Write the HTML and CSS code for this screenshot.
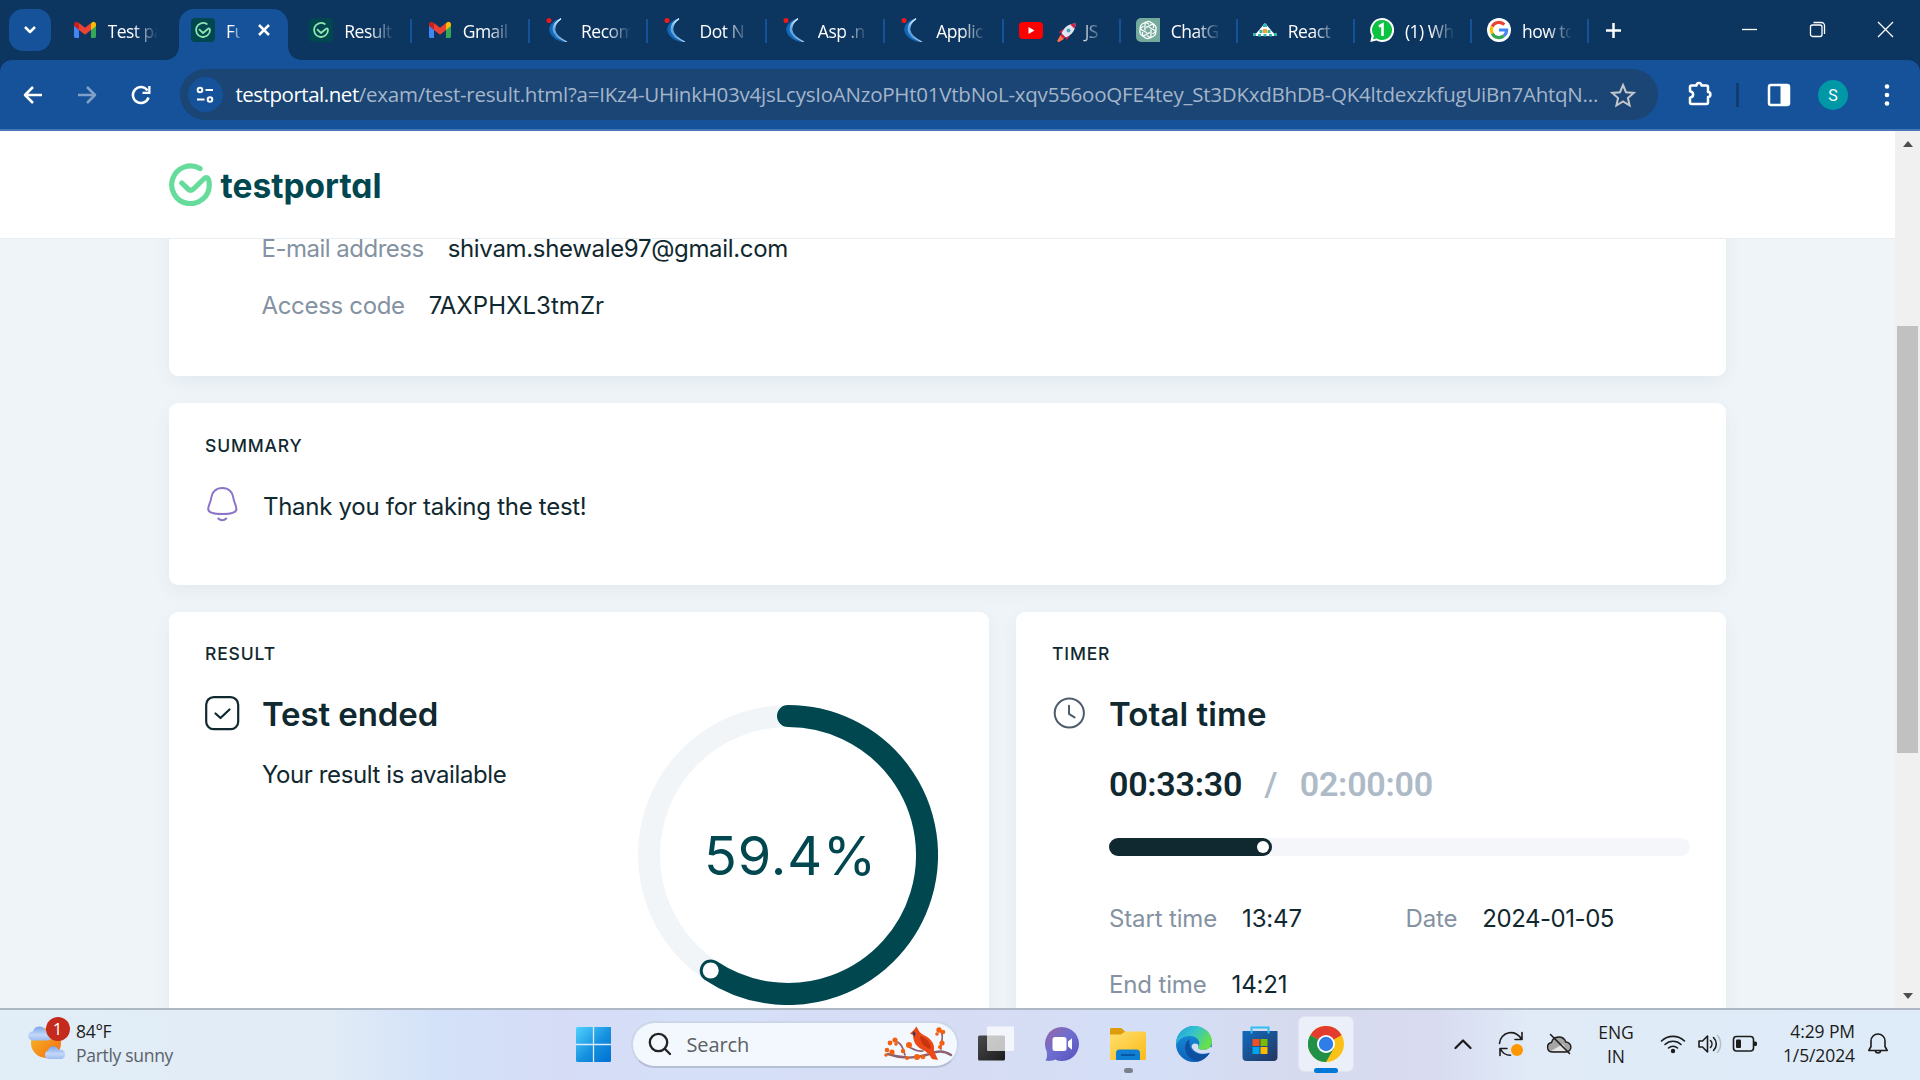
FILE: index.html
```html
<!DOCTYPE html>
<html lang="en">
<head>
<meta charset="utf-8">
<title>Testportal - test result</title>
<link rel="stylesheet" href="styles.css">
</head>
<body>
<svg width="0" height="0" class="defs" aria-hidden="true">
  <defs>
    <linearGradient id="swoosh" x1="0" y1="0" x2="0" y2="1"><stop offset="0" stop-color="#e4f0fa"/><stop offset=".35" stop-color="#6fb0e4"/><stop offset=".7" stop-color="#5a9fdc"/><stop offset="1" stop-color="#a9c4de"/></linearGradient>
    <linearGradient id="win" gradientUnits="userSpaceOnUse" x1="0" y1="0" x2="35" y2="35"><stop offset="0" stop-color="#4fd2ff"/><stop offset=".55" stop-color="#1590de"/><stop offset="1" stop-color="#0070d2"/></linearGradient>
    <linearGradient id="sun" x1="0" y1="0" x2="1" y2="1"><stop offset="0" stop-color="#f9bd2b"/><stop offset="1" stop-color="#f26a0c"/></linearGradient>
    <linearGradient id="cloud" x1="0" y1="0" x2="0" y2="1"><stop offset="0" stop-color="#7ba5ea"/><stop offset=".6" stop-color="#c3d8f8"/><stop offset="1" stop-color="#9dbcf0"/></linearGradient>
    <linearGradient id="chat" x1="0" y1="0" x2="1" y2="1"><stop offset="0" stop-color="#9a62a0"/><stop offset=".45" stop-color="#6f6fd0"/><stop offset="1" stop-color="#5650c0"/></linearGradient>
    <linearGradient id="folder" x1="0" y1="0" x2="1" y2="1"><stop offset="0" stop-color="#ffdf70"/><stop offset="1" stop-color="#fbbb18"/></linearGradient>
    <linearGradient id="edgeTop" x1="0" y1="0" x2="1" y2=".5"><stop offset="0" stop-color="#1f9ee0"/><stop offset=".5" stop-color="#35c3cc"/><stop offset="1" stop-color="#66e04a"/></linearGradient>
    <linearGradient id="edgeBody" x1="0" y1="0" x2="0" y2="1"><stop offset="0" stop-color="#1a94dc"/><stop offset="1" stop-color="#0a62ba"/></linearGradient>
    <linearGradient id="store" x1="0" y1="0" x2="1" y2="1"><stop offset="0" stop-color="#0f6cc0"/><stop offset="1" stop-color="#26355e"/></linearGradient>
    <linearGradient id="dark" x1="0" y1="0" x2="1" y2="1"><stop offset="0" stop-color="#4a4a4a"/><stop offset="1" stop-color="#1c1c1c"/></linearGradient>
    <symbol id="gmail" viewBox="0 0 24 24">
      <path d="M1 6v12.500c0 .8.700 1.500 1.500 1.500H6V10z" fill="#4285f4"/><path d="M23 6v12.500c0 .8-.7 1.500-1.500 1.500H18V10z" fill="#34a853"/>
      <path d="M18 5.500V12l5-4V6.500c0-2.600-2.600-3.300-4-2.200z" fill="#fbbc04"/><path d="M6 12V5l6 4.700L18 5v7l-6 4.700z" fill="#ea4335"/><path d="M1 6.500V8l5 4V5.200l-1-.9C3.600 3.200 1 3.900 1 6.500z" fill="#c5221f"/>
    </symbol>
    <symbol id="tp" viewBox="0 0 24 24"><rect width="24" height="24" rx="4" fill="#00474f"/><path d="M15.800 6.100A7 7 0 1 0 19 12c0-1.600-1-2.200-2.200-1L12 15l-3.500-3.400" fill="none" stroke="#8fe6ae" stroke-width="1.800" stroke-linecap="round" stroke-linejoin="round"/></symbol>
    <symbol id="naukri" viewBox="0 0 24 24"><path d="M15 .8C7.500 2.500 3.300 7 3.800 12.300 4.500 18 10.500 23 21 24 15 20.800 9.300 17 8.500 12.300 7.800 8 10.500 4 15 .8z" fill="#1268bb" stroke="#1268bb"/><path d="M15 .8C9.500 3.500 6.800 7.500 7.300 12.200 8 17 13.500 21 21 24 14 20.500 9.500 17 8.800 12.300 8.200 8 11 3.800 15 .8z" fill="url(#swoosh)" stroke="url(#swoosh)" stroke-width="1.200"/><circle cx="3" cy="2.500" r="2.500" fill="#f01818"/></symbol>
  </defs>
</svg>

<header class="tabstrip">
  <button class="tab-search"><svg width="16" height="12" viewBox="0 0 16 12"><path d="M3 3l5 5 5-5" class="line w25"/></svg></button>
  <div class="tabs">
    <div class="tab bare"><svg class="fav"><use href="#gmail"/></svg><span class="label">Test pa</span></div>
    <div class="tab active"><svg class="tabshape" width="138" height="51" viewBox="0 0 138 51"><path d="M0 51c7 0 14-5 14-14V15A15 15 0 0 1 29 0h79a15 15 0 0 1 15 15v22c0 9 7 14 14 14z" fill="#155299"/></svg><svg class="fav"><use href="#tp"/></svg><span class="label short">Full</span><svg class="close" width="14" height="14" viewBox="0 0 14 14"><path d="M2 2l10 10M12 2L2 12" class="line w25"/></svg></div>
    <div class="tab"><svg class="fav"><use href="#tp"/></svg><span class="label">Result</span></div>
    <div class="tab"><svg class="fav"><use href="#gmail"/></svg><span class="label">Gmail</span></div>
    <div class="tab"><svg class="fav"><use href="#naukri"/></svg><span class="label">Recom</span></div>
    <div class="tab"><svg class="fav"><use href="#naukri"/></svg><span class="label">Dot N</span></div>
    <div class="tab"><svg class="fav"><use href="#naukri"/></svg><span class="label">Asp .n</span></div>
    <div class="tab"><svg class="fav"><use href="#naukri"/></svg><span class="label">Applic</span></div>
    <div class="tab narrow"><svg class="fav" viewBox="0 0 24 24"><rect y="4" width="24" height="17" rx="4" fill="#f00"/><path d="M9.500 9v7l6-3.500z" fill="#fff"/></svg><span class="label"><svg class="rocket" width="19" height="19" viewBox="0 0 19 19"><path d="M6 6L1.500 9.500 6 10zM13 12l-3.500 5.500L9 13z" fill="#d81b4a"/><path d="M18.500.5C12 .5 7 4 4.500 10.500l4 4C15 12 18.500 7 18.500.5z" fill="#dfe6ee"/><path d="M18.500.5c-2 0-3.700.3-5.200 1l4.200 4.200c.7-1.600 1-3.300 1-5.200zM4.500 10.500l4 4-2 1.500-3.500-3.500z" fill="#d81b4a"/><circle cx="11.500" cy="7.500" r="2" fill="#4d9fc0"/><path d="M3.500 14l1.800 1.800L1 18.500z" fill="#ff7043" stroke="#ff7043" stroke-width="2"/></svg>JS</span></div>
    <div class="tab narrow"><svg class="fav" viewBox="0 0 24 24"><path d="M5 0h19v24H5a5 5 0 0 1-5-5V5a5 5 0 0 1 5-5z" fill="#74aa9c"/><g fill="none" stroke="#fff" stroke-width="1.300"><path id="petal" d="M9 6.200c.3-2.200 3-3.600 5.300-2.200l3.200 2.100v3.900M9 6.200v6.200"/><use href="#petal" transform="rotate(60 12 12)"/><use href="#petal" transform="rotate(120 12 12)"/><use href="#petal" transform="rotate(180 12 12)"/><use href="#petal" transform="rotate(240 12 12)"/><use href="#petal" transform="rotate(300 12 12)"/></g></svg><span class="label">ChatG</span></div>
    <div class="tab narrow"><svg class="fav" viewBox="0 0 24 24"><path d="M12 5L1 18h22z" fill="#fff"/><path d="M10 6h4v3h-4zM6.500 12h3v3h-3zM14.500 12h3v3h-3z" fill="#35b6b0"/><path d="M10 11h4v4h-4z" fill="#f5a623"/><path d="M0 15h3v3H0zM5 16h3v2.500H5zM10.500 16h3v2.500h-3zM16 16h3v2.500h-3zM21 15h3v3h-3z" fill="#35b6b0"/></svg><span class="label">React</span></div>
    <div class="tab narrow"><svg class="fav" viewBox="0 0 24 24"><path d="M12 0a12 12 0 1 1-5.500 22.600L.3 24l1.300-6.200A12 12 0 0 1 12 0z" fill="#fff"/><path d="M12 2a10 10 0 1 1-5.200 18.500L3 21.300l.9-3.500A10 10 0 0 1 12 2z" fill="#0dc143"/><path d="M9 8.500l3.500-2V18" fill="none" stroke="#fff" stroke-width="2.600"/></svg><span class="label">(1) Wh</span></div>
    <div class="tab narrow"><svg class="fav" viewBox="0 0 24 24"><circle cx="12" cy="12" r="12" fill="#fff"/><g fill="none" stroke-width="3.200"><path d="M17.300 6.600A7.600 7.600 0 0 0 5.200 8.600" stroke="#ea4335"/><path d="M5.200 8.600a7.600 7.600 0 0 0 0 6.800" stroke="#fbbc05"/><path d="M5.200 15.400a7.600 7.600 0 0 0 11.700 2.300" stroke="#34a853"/><path d="M12 12h7.600c0 2.400-1 4.400-2.700 5.700" stroke="#4285f4"/></g></svg><span class="label">how to</span></div>
  </div>
  <svg class="plus" width="17" height="17" viewBox="0 0 17 17"><path d="M8.500 1v15M1 8.500h15" class="line w25"/></svg>
  <div class="wincontrols">
    <span><svg width="17" height="17" viewBox="0 0 17 17"><path d="M1 8.500h15" class="line thin"/></svg></span>
    <span><svg width="17" height="17" viewBox="0 0 17 17"><rect x="1.500" y="4" width="11.500" height="11.500" rx="2" class="line thin"/><path d="M4.500 1.500h8a3 3 0 0 1 3 3V13" class="line thin"/></svg></span>
    <span><svg width="17" height="17" viewBox="0 0 17 17"><path d="M1 1l15 15M16 1L1 16" class="line thin"/></svg></span>
  </div>
</header>

<nav class="toolbar">
  <span class="tool"><svg width="22" height="22" viewBox="0 0 22 22"><path d="M20 11H3M11 3l-8 8 8 8" class="line w25"/></svg></span>
  <span class="tool dim"><svg width="22" height="22" viewBox="0 0 22 22"><path d="M2 11h17M11 3l8 8-8 8" class="line w25"/></svg></span>
  <span class="tool"><svg width="22" height="22" viewBox="0 0 22 22"><path d="M18.500 13.500A8 8 0 1 1 17.500 6.500" class="line w25"/><path d="M20.500 2v8h-8V7.700h5.700V2z" fill="#fff"/></svg></span>
  <div class="omnibox">
    <span class="site"><svg width="20" height="20" viewBox="0 0 20 20"><g class="line w2"><circle cx="5" cy="5" r="2.300"/><path d="M10.500 5H18"/><circle cx="15" cy="14.500" r="2.300"/><path d="M2 14.500h7.500"/></g></svg></span>
    <div class="url"><b>testportal.net</b><span>/exam/test-result.html?a=IKz4-UHinkH03v4jsLcysIoANzoPHt01VtbNoL-xqv556ooQFE4tey_St3DKxdBhDB-QK4ltdexzkfugUiBn7AhtqN...</span></div>
    <svg class="star" width="26" height="26" viewBox="0 0 26 26"><path d="M13 3l3 7.200 7.700.7-5.800 5.100 1.700 7.500-6.600-4-6.600 4 1.700-7.500L2.300 10.900l7.700-.7z" fill="none" stroke="#c4c7cc" stroke-width="2"/></svg>
  </div>
  <div class="actions">
    <span class="tool"><svg class="puzzle" width="28" height="28" viewBox="0 0 28 28"><path d="M4 7a1.500 1.500 0 0 1 1.500-1.500h5a2.500 2.600 0 0 1 5 0H20.500A1.500 1.500 0 0 1 22 7v5a2.400 2.500 0 0 1 0 5v5.500a1.500 1.500 0 0 1-1.500 1.500h-15A1.500 1.500 0 0 1 4 22.500v-4.800c4.200-.8 4.200-5.600 0-6.400z" class="line w25"/></svg></span>
    <i class="divider"></i>
    <span class="tool"><svg width="24" height="24" viewBox="0 0 24 24"><rect x="2" y="2" width="20" height="20" rx="2" class="line w25"/><path d="M13.500 2H22v20h-8.500z" fill="#fff"/></svg></span>
    <span class="tool"><span class="avatar">S</span></span>
    <span class="tool"><svg width="6" height="24" viewBox="0 0 6 24" fill="#fff"><circle cx="3" cy="3.500" r="2.300"/><circle cx="3" cy="12" r="2.300"/><circle cx="3" cy="20.500" r="2.300"/></svg></span>
  </div>
</nav>

<div class="viewport">
  <div class="page">
    <div class="topbar">
      <svg width="43" height="43" viewBox="0 0 43 43"><path d="M31 5.600A18.800 18.800 0 1 0 40.300 21.500C40.300 19 40 17 39 15.500c-.8-1.300-2.600-1.300-3.800 0L24.500 26c-1.800 1.700-3.700 1.700-5.500 0L12.800 20" fill="none" stroke="#66dc9c" stroke-width="5.200" stroke-linecap="round" stroke-linejoin="round"/></svg>
      <span class="brand">testportal</span>
    </div>
    <main class="content">
      <section class="card person">
        <div class="pair"><span class="key mail">E-mail address</span><span>shivam.shewale97@gmail.com</span></div>
        <div class="pair"><span class="key">Access code</span><span class="code">7AXPHXL3tmZr</span></div>
      </section>
      <section class="card summary">
        <h2>SUMMARY</h2>
        <div class="row"><svg class="bell" width="36" height="36" viewBox="0 0 36 36"><g fill="none" stroke="#8b74c8" stroke-width="2" stroke-linecap="round"><path d="M17.300 2c-6.300 0-10.500 4-11 9.500-.4 5-3.100 7.500-3.100 11.500 0 3.600 5.300 5 14.100 5s14.100-1.400 14.100-5c0-4-2.700-6.500-3.100-11.500C27.800 6 23.600 2 17.300 2z"/><path d="M13.300 32.500c2.300 2.400 5.700 2.400 8 0"/></g></svg><p>Thank you for taking the test!</p></div>
      </section>
      <div class="columns">
        <section class="card result">
          <div>
            <h2>RESULT</h2>
            <div class="row head"><svg width="36" height="36" viewBox="0 0 36 36"><g fill="none" stroke="#10282f" stroke-width="2.200" stroke-linecap="round" stroke-linejoin="round"><rect x="1.200" y="1.200" width="32" height="32" rx="7.500"/><path d="M10.500 17.500l5 4.500 9-8.500"/></g></svg><h3>Test ended</h3></div>
            <p class="note">Your result is available</p>
          </div>
          <svg class="donut" width="300" height="300" viewBox="0 0 300 300">
            <circle cx="150" cy="150" r="139" fill="none" stroke="#f1f5f8" stroke-width="22"/>
            <path d="M150 11A139 139 0 1 1 72.700 265.500" fill="none" stroke="#00474f" stroke-width="22" stroke-linecap="round"/>
            <circle cx="72.700" cy="265.500" r="8" fill="#fff"/>
            <text x="152.500" y="170" text-anchor="middle">59.4%</text>
          </svg>
        </section>
        <section class="card timer">
          <h2>TIMER</h2>
          <div class="row head"><svg width="36" height="36" viewBox="0 0 36 36"><g fill="none" stroke="#4d5c6a" stroke-width="2" stroke-linecap="round" stroke-linejoin="round"><circle cx="17.300" cy="17" r="14.600"/><path d="M17 9.800v8l5.500 3.600"/></g></svg><h3 class="tt">Total time</h3></div>
          <div class="body">
            <div class="clock"><span>00:33:30</span><span class="mute">/</span><span class="mute">02:00:00</span></div>
            <div class="bar"><div class="fill" style="width:28.100%"><i></i></div></div>
            <div class="facts">
              <div class="pair"><span class="key">Start time</span><span>13:47</span></div>
              <div class="pair"><span class="key">Date</span><span class="date">2024-01-05</span></div>
              <div class="pair"><span class="key">End time</span><span>14:21</span></div>
            </div>
          </div>
        </section>
      </div>
    </main>
  </div>
  <div class="scrollbar"><i class="up"></i><div class="track"><div class="thumb"></div></div><i class="down"></i></div>
</div>

<footer class="taskbar">
  <div class="weather">
    <div class="wicon"><svg width="38" height="38" viewBox="0 0 38 38"><circle cx="18" cy="20" r="15" fill="url(#sun)"/><path d="M4.500 17.500a4.500 4.500 0 0 1 .5-9A6.500 6.500 0 0 1 17.500 8a4.800 4.800 0 0 1 3 9.500z" fill="url(#cloud)"/><path d="M20 36a4.500 4.500 0 0 1 0-8.500 5.500 5.500 0 0 1 10.500-.5 4.600 4.600 0 0 1 3.500 9z" fill="url(#cloud)"/></svg><span class="badge">1</span></div>
    <div class="wtext"><span>84°F</span><span class="sub">Partly sunny</span></div>
  </div>
  <div class="apps">
    <span class="app"><svg width="35" height="35" viewBox="0 0 35 35" fill="url(#win)"><path d="M1.500 0H35v33.500a1.500 1.500 0 0 1-1.500 1.500h-32A1.500 1.500 0 0 1 0 33.500v-32A1.500 1.500 0 0 1 1.500 0z"/><path d="M17.500 0v35M0 17.500h35" stroke="#dbe9fb" stroke-width="1.300"/></svg></span>
    <div class="search">
      <svg width="24" height="24" viewBox="0 0 24 24"><g fill="none" stroke="#222" stroke-width="2.300" stroke-linecap="round"><circle cx="10.500" cy="10.500" r="8.700"/><path d="M17 17l5 5"/></g></svg>
      <span>Search</span>
      <svg class="bird" width="70" height="36" viewBox="0 0 70 36"><g fill="none" stroke="#8d6270" stroke-width="1.700" stroke-linecap="round"><path d="M5 28c14 5 28 4 38 1s15-6 25 0" stroke-width="2.400"/><path d="M11 15c8 1 9 8 11 14M26 21c4 2 8 5 14 4M58 6c4 6-2 13 0 17"/></g><g fill="#f4600f"><circle cx="7" cy="17" r="2.400"/><circle cx="12" cy="14" r="2.600"/><circle cx="13" cy="18" r="1.800"/><circle cx="4" cy="24" r="2.300"/><circle cx="9" cy="26" r="2.600"/><circle cx="3" cy="29" r="1.800"/><circle cx="20" cy="25" r="2.200"/><circle cx="26" cy="19" r="3"/><circle cx="34" cy="31" r="3"/><circle cx="40" cy="31" r="2.300"/><circle cx="24" cy="32" r="2"/><circle cx="56" cy="4" r="2.700"/><circle cx="60" cy="6" r="2.300"/><circle cx="54" cy="8" r="1.800"/><circle cx="59" cy="17" r="2.600"/><circle cx="57" cy="21" r="2"/></g><path d="M33.500.5l-3.500 4.500-3 2.500 3 1.500c.3 8 4 12 10 15 4 2 6 4 9 9l6 1-4-9c1-7-2.500-11.500-8.500-15-3.500-2-5.500-3-6.500-5z" fill="#ea4a18"/><path d="M37 10c6 1.500 10.500 6 11 13-6-1-11-6-11-13z" fill="#c8340e"/><path d="M30 5l2.500 2-.8 4-2-3z" fill="#33386a"/></svg>
    </div>
    <span class="app"><svg width="36" height="36" viewBox="0 0 36 36"><rect x="0" y="9.500" width="27" height="25" rx="1.500" fill="url(#dark)"/><path d="M9 .5h27v23.500a1 1 0 0 1-1 1H10a1 1 0 0 1-1-1z" fill="#fff" opacity=".72"/></svg></span>
    <span class="app"><svg width="36" height="36" viewBox="0 0 36 36"><path d="M18 1a17 17 0 1 1-7 32.500C8 35 4.500 35.300 1.500 34.500 3 32.500 3.300 29 2.700 25.500A17 17 0 0 1 18 1z" fill="url(#chat)"/><rect x="8.500" y="11" width="14" height="14" rx="2.500" fill="#fff"/><path d="M24 15.500l4-3.200v11.400l-4-3.200z" fill="#fff"/></svg></span>
    <span class="app open"><svg width="36" height="36" viewBox="0 0 36 36"><path d="M0 3.500A1.500 1.500 0 0 1 1.500 2h9.700l4 3.500V10H0z" fill="#dd9c0c"/><path d="M0 8.500h11l4-3H34.500A1.500 1.500 0 0 1 36 7v25.500a1.500 1.500 0 0 1-1.500 1.500h-33A1.500 1.500 0 0 1 0 32.500z" fill="url(#folder)"/><path d="M6 34V27a3.500 3.500 0 0 1 3.500-3.500h17A3.500 3.500 0 0 1 30 27v7z" fill="#0f7fd4"/><path d="M11 29h14" stroke="#08519a" stroke-width="1.800"/></svg></span>
    <span class="app"><svg width="36" height="36" viewBox="0 0 36 36"><circle cx="18" cy="18" r="18" fill="url(#edgeBody)"/><path d="M18 0c10 0 18 7 18 15.500 0 5-3.800 8.500-8.500 8.500-3.500 0-5.500-1.200-5.500-2.500s1.300-1.500 1.300-4.500-3-7-9.300-7C7 10 2 14 .3 19-.8 8.500 7.500 0 18 0z" fill="url(#edgeTop)"/><path d="M13.500 13C9.500 16 8 21 10 26c2.500 6.200 8 9.500 13 9.300 5-1.600 8.500-5 10.500-8.300-9 3.500-19 0-20-8.500-.2-2 0-4 0-5.500z" fill="#0f4f9f"/><path d="M22 21.500c0 1.300 2 2.500 5.500 2.500 2.700 0 5-1 6.500-3l2 .5v5l-2.700.2C27 29 19 27.500 16 22c-1-2 0-4.500 3-4.500 2.200 0 4 1 3.300 2.500z" fill="#d6def4"/></svg></span>
    <span class="app"><svg width="36" height="36" viewBox="0 0 36 36"><path d="M.5 5h35v26a4 4 0 0 1-4 4h-27a4 4 0 0 1-4-4z" fill="url(#store)"/><path d="M9.500 7.500V1.500h17v6" fill="none" stroke="#2fc0f2" stroke-width="2"/><path d="M10.500 13h7v7h-7z" fill="#f25022"/><path d="M18.500 13h7v7h-7z" fill="#7fba00"/><path d="M10.500 21h7v7h-7z" fill="#00a4ef"/><path d="M18.500 21h7v7h-7z" fill="#ffb900"/></svg></span>
    <span class="app current"><span class="tile"><svg width="36" height="36" viewBox="0 0 36 36"><circle cx="18" cy="18" r="18" fill="#fbc116"/><path d="M18 18L2.400 9A18 18 0 0 1 33.600 9z" fill="#e33b2e"/><path d="M2.400 9A18 18 0 0 0 18 36l7.800-13.500L18 18z" fill="#219147"/><circle cx="18" cy="18" r="9" fill="#fff"/><circle cx="18" cy="18" r="7.200" fill="#2f7de9"/></svg></span></span>
  </div>
  <div class="tray">
    <span class="t48"><svg width="18" height="12" viewBox="0 0 18 12"><path d="M1.500 10L9 2.500l7.500 7.500" class="ink w2"/></svg></span>
    <span class="t48"><svg width="26" height="26" viewBox="0 0 26 26"><g class="ink"><path d="M1.500 12.500A11.500 11.500 0 0 1 23.500 8.500M24 1.500V8.500h-7M12.500 24.300A11 11 0 0 1 2.500 18M2 24.500V17.500h7"/></g><circle cx="19" cy="19" r="6" fill="#ff9800"/></svg></span>
    <span class="t48"><svg width="26" height="22" viewBox="0 0 26 22"><path d="M6 19a4.800 4.800 0 0 1-.5-9.500 7.500 7.500 0 0 1 14.300-.5A5 5 0 0 1 20 19z" fill="#a5a5a5" stroke="#1c1c1c" stroke-width="1.400"/><path d="M5 18l12-7 4 7z" fill="#e4e4e4"/><path d="M4.500 1.500l19 19" class="ink"/></svg></span>
    <span class="lang"><span>ENG</span><span>IN</span></span>
    <span class="wifi"><svg width="26" height="20" viewBox="0 0 26 20"><path d="M1.500 7a16.500 16.500 0 0 1 23 0M5 10.500a11.500 11.500 0 0 1 16 0M8.500 14a6.500 6.500 0 0 1 9 0" class="ink"/><circle cx="13" cy="17" r="2.200" fill="#1c1c1c"/></svg></span>
    <span class="vol"><svg width="26" height="22" viewBox="0 0 26 22"><path d="M2 8h3.500l5-5v16l-5-5H2zM13.500 7.500a5 5 0 0 1 0 7M16.500 4.500a9 9 0 0 1 0 13" class="ink"/><path d="M20 2a13 13 0 0 1 0 18" fill="none" stroke="#b5bdc6" stroke-width="1.500"/></svg></span>
    <span class="batt"><svg width="26" height="18" viewBox="0 0 26 18"><rect x="1.500" y="1.500" width="20" height="14.500" rx="3" class="ink"/><rect x="4" y="4.500" width="5" height="8.500" rx="1" fill="#1c1c1c"/><path d="M22 6.500h1.500a1.500 1.500 0 0 1 1.500 1.500v1.500a1.500 1.500 0 0 1-1.500 1.500H22z" fill="#1c1c1c"/></svg></span>
    <span class="time"><span>4:29 PM</span><span>1/5/2024</span></span>
    <span class="notify"><svg width="22" height="24" viewBox="0 0 22 24"><path d="M11 2a7 7 0 0 0-7 7v5.500L1.800 18.500h18.400L18 14.500V9a7 7 0 0 0-7-7zM8.300 19a2.800 2.800 0 0 0 5.400 0" class="ink"/></svg></span>
  </div>
</footer>
</body>
</html>
```
FILE: styles.css
```css
* { box-sizing: border-box; }
body {
  margin: 0;
  width: 1920px;
  height: 1080px;
  overflow: hidden;
  display: flex;
  flex-direction: column;
  background: #0c3560;
  font-family: "Open Sans", "Noto Sans", sans-serif;
}
h2, h3, p { margin: 0; }
svg { display: block; flex: none; }
.defs { position: absolute; }
.line { fill: none; stroke: #fff; stroke-width: 2; stroke-linejoin: round; }
.w25 { stroke-width: 2.5; }
.w2 { stroke-width: 2; }
.thin { stroke-width: 1.3; }
.ink { fill: none; stroke: #1c1c1c; stroke-width: 1.6; stroke-linecap: round; stroke-linejoin: round; }
.ink.w2 { stroke-width: 2.2; }

/* Browser tabs */
.tabstrip { height: 60px; flex: none; display: flex; align-items: flex-start; padding-left: 9px; }
.tab-search {
  width: 42px; height: 42px; margin-top: 9px; padding: 0; border: 0; border-radius: 14px;
  background: #155299; display: flex; align-items: center; justify-content: center;
}
.tabs { display: flex; margin: 9px 0 0 4.5px; }
.tab {
  width: 118.4px; height: 51px; padding: 0 0 9px 17px; position: relative;
  display: flex; align-items: center; color: #fff;
}
.tab.narrow { width: 117.1px; padding-left: 16px; }
.tab::after { content: ""; position: absolute; right: -1px; top: 10px; width: 2px; height: 24px; background: #155299; }
.tab.bare::after, .tab.active::after { display: none; }
.tab.active > * { position: relative; }
.tab.active > .tabshape { position: absolute; left: -9px; top: 0; }
.fav { width: 24px; height: 24px; margin-right: 11px; }
.label {
  width: 50px; overflow: hidden; white-space: nowrap; font-size: 17.5px; line-height: 24px; letter-spacing: -.5px; padding-top: 2px;
  -webkit-mask-image: linear-gradient(90deg, #000 50%, transparent); mask-image: linear-gradient(90deg, #000 50%, transparent);
}
.label.short { width: 14px; -webkit-mask-image: linear-gradient(90deg, #000 40%, transparent 120%); mask-image: linear-gradient(90deg, #000 40%, transparent 120%); }
.close { margin-left: 17px; }
.rocket { display: inline-block; vertical-align: -4px; margin: 0 9px 0 3px; }
.plus { margin: 22px 0 0 17px; }
.wincontrols { margin-left: auto; display: flex; margin-top: 21px; }
.wincontrols span { width: 68.4px; display: flex; justify-content: center; }

/* Address bar */
.toolbar {
  height: 71px; flex: none; display: flex; align-items: center; padding: 0 6px; background: #155299;
  border-bottom: 2px solid #4678b6; border-radius: 12px 12px 0 0;
}
.tool { width: 54px; display: flex; justify-content: center; align-items: center; }
.dim { opacity: .45; }
.omnibox {
  width: 1479px; height: 51px; margin-left: 12px; border-radius: 26px; background: #1a4575;
  display: flex; align-items: center; padding-left: 8px;
}
.site { width: 35px; height: 35px; border-radius: 50%; background: #155299; display: flex; align-items: center; justify-content: center; }
.url { width: 1376px; padding: 0 0 2px 12.5px; display: flex; font-size: 20.5px; line-height: 28px; white-space: nowrap; color: #a5b5c9; }
.url b { font-weight: 400; color: #fff; letter-spacing: -.46px; }
.url span { letter-spacing: -.23px; }
.star { margin-left: 11px; }
.actions { display: flex; align-items: center; margin-left: 13px; }
.puzzle { margin: -2px 0 0 3px; }
.divider { width: 3px; height: 24px; margin: 0 13px 0 11px; background: #103d70; }
.avatar {
  width: 30px; height: 30px; border-radius: 50%; background: #0097a7; color: #fff;
  font: 16px/31px Roboto, sans-serif; text-align: center;
}

/* Page */
.viewport { flex: 1; min-height: 0; display: flex; }
.page { flex: 1; height: 877px; overflow: hidden; background: #eff4f8; font-family: Inter, sans-serif; color: #10282f; }
.topbar {
  position: relative; z-index: 2; height: 108px; display: flex; align-items: center; gap: 8.5px;
  padding: 0 0 1px 169px; background: #fff; border-bottom: 1px solid #e9eef3;
}
.brand { font-size: 33.5px; font-weight: 700; letter-spacing: 0; line-height: 40px; padding-top: 3px; color: #00474f; font-feature-settings: "cv11"; }
.content { width: 1557px; margin: -40px 0 0 169px; display: flex; flex-direction: column; gap: 27px; }
.card { background: #fff; border-radius: 9px; box-shadow: 0 6px 18px rgba(30, 80, 110, .06); }
.person { height: 177px; padding: 20.5px 0 0 92.5px; }
.pair { height: 57px; display: flex; align-items: center; gap: 24px; font-size: 24px; letter-spacing: -.33px; white-space: nowrap; }
.key { color: #8492a2; }
.mail { letter-spacing: -.5px; }
.code { letter-spacing: .05px; }
.summary { height: 182px; padding: 31px 36px; }
h2 { font-size: 17.5px; font-weight: 500; line-height: 24px; letter-spacing: .85px; }
.row { margin-top: 30px; height: 36px; display: flex; align-items: center; gap: 22px; }
.row p { font-size: 24px; letter-spacing: -.28px; }
.row.head { margin-top: 30px; }
.bell { margin-top: -4px; }
h3 { font-size: 33px; font-weight: 600; line-height: 36px; letter-spacing: -.1px; margin-left: -1px; padding-bottom: 1px; }
.columns { display: flex; gap: 27px; }
.result { width: 820px; height: 500px; padding: 31px 51px 0 36px; display: flex; justify-content: space-between; }
.result h2, .timer h2 { margin-top: -1px; margin-bottom: 1px; }
.note { margin: 25px 0 0 57px; font-size: 24px; line-height: 36px; letter-spacing: -.4px; }
.donut { margin-top: 62px; }
.donut text { font: 400 54px Inter, sans-serif; letter-spacing: .9px; fill: #00474f; }
.timer { flex: 1; padding: 31px 36px 0; }
.tt { letter-spacing: .1px; }
.body { padding-left: 57px; }
.clock { margin-top: 32px; display: flex; font: 600 34px/40px Roboto, sans-serif; letter-spacing: -.25px; }
.clock .mute { color: #aebac7; margin-left: 22.5px; }
.bar { margin-top: 34px; height: 18px; border-radius: 9px; background: #f4f6fa; }
.fill { height: 18px; border-radius: 9px; background: #10282f; display: flex; align-items: center; justify-content: flex-end; padding-right: 3px; }
.fill i { width: 12px; height: 12px; border-radius: 50%; background: #fff; }
.facts { margin-top: 29px; display: grid; grid-template-columns: 296.5px 1fr; }
.facts .pair { height: 66px; gap: 25px; letter-spacing: -.15px; }
.facts .date { letter-spacing: -.46px; }

.scrollbar { width: 25px; background: #f0f0f0; display: flex; flex-direction: column; align-items: center; padding: 10px 0 9px; }
.scrollbar .up { border: 5.5px solid transparent; border-bottom: 6px solid #4d4d4d; border-top: 0; }
.scrollbar .down { border: 5.5px solid transparent; border-top: 6px solid #4d4d4d; border-bottom: 0; }
.track { flex: 1; width: 21px; padding-top: 179px; }
.thumb { height: 427px; background: #c1c1c1; }

/* Windows taskbar */
.taskbar {
  height: 72px; flex: none; border-top: 2px solid #aeb8c4; display: flex; position: relative; color: #1c1c1c;
  background: linear-gradient(90deg, #e1edf7 0, #e1ecf7 330px, #d3e1f9 440px, #d6dcf6 560px, #d5e0f8 700px, #d6dcf3 960px, #d4dff7 1150px, #d6daee 1300px, #d9dcf0 1440px, #e0ebf7 1530px, #deebf8 1920px);
}
.weather { width: 560px; display: flex; padding-left: 28px; }
.wicon { width: 38px; padding-top: 13px; position: relative; }
.badge {
  position: absolute; left: 17.5px; top: 7px; width: 24px; height: 24px; border-radius: 50%; background: #c42b1c;
  color: #fff; font-size: 17px; line-height: 23px; text-align: center;
}
.wtext { margin: 9px 0 0 10px; display: flex; flex-direction: column; font-size: 17.5px; line-height: 24px; letter-spacing: -.3px; }
.sub { color: #5b6168; }
.apps { display: flex; align-items: center; height: 68px; }
.app { width: 66px; height: 68px; display: flex; align-items: center; justify-content: center; position: relative; }
.search {
  width: 328px; height: 47px; margin: 0 4px 0 5px; border-radius: 24px; background: #f3f7fe; border: 2px solid #ccd6ea; border-bottom-color: #b4bfd6;
  display: flex; align-items: center; padding: 0 0 0 15px; color: #5c5f64; font-size: 20px; letter-spacing: -.1px;
}
.search span { margin-left: 14.5px; }
.bird { margin-left: auto; margin-right: 4px; }
.open::after { content: ""; position: absolute; bottom: 5px; width: 9px; height: 5px; border-radius: 3px; background: #7c828d; }
.tile { width: 56px; height: 56px; border-radius: 6px; background: #eaeff9; border: 1px solid #dde3f0; display: flex; align-items: center; justify-content: center; }
.current::after { content: ""; position: absolute; bottom: 5px; width: 24px; height: 5px; border-radius: 3px; background: #0078d7; }
.tray { margin-left: auto; padding-right: 19px; display: flex; align-items: center; height: 68px; font-size: 17.5px; line-height: 24px; letter-spacing: -.1px; }
.tray > span { display: flex; justify-content: center; }
.t48 { width: 48px; }
.lang { width: 66px; flex-direction: column; align-items: center; }
.wifi { width: 48px; }
.vol { width: 26px; }
.batt { width: 44px; }
.tray > .time { width: 88px; flex-direction: column; align-items: flex-end; padding-bottom: 2px; }
.notify { width: 46px; }
```
